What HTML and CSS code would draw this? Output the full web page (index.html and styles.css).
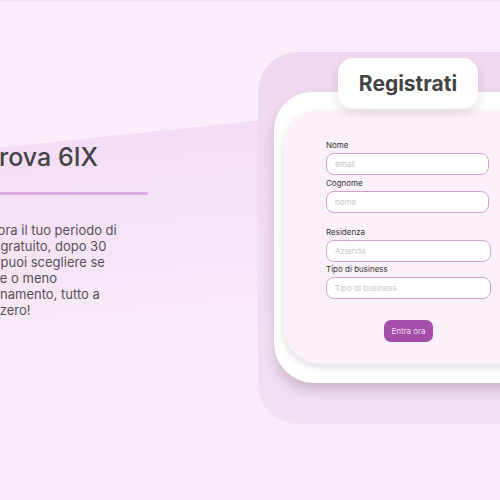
FILE: index.html
```html
<!DOCTYPE html>
<html lang="it">
<head>
<meta charset="utf-8">
<title>Prova 6IX</title>
<link rel="stylesheet" href="styles.css">
</head>
<body>
<main class="page">
  <section class="intro">
    <h1 class="intro-title">Prova 6IX</h1>
    <div class="intro-rule"></div>
    <p class="intro-text">Inizia ora il tuo periodo di<br>prova gratuito, dopo 30<br>giorni puoi scegliere se<br>attivare o meno<br>l'abbonamento, tutto a<br>costo zero!</p>
  </section>
  <section class="panel">
    <div class="tab">Registrati</div>
    <div class="card">
      <form class="form-panel">
        <div class="group">
          <label class="field"><span class="field-label">Nome</span><input class="field-input" type="text" placeholder="email"></label>
          <label class="field"><span class="field-label">Cognome</span><input class="field-input" type="text" placeholder="nome"></label>
        </div>
        <div class="group group-wide">
          <label class="field"><span class="field-label">Residenza</span><input class="field-input" type="text" placeholder="Azienda"></label>
          <label class="field"><span class="field-label">Tipo di business</span><input class="field-input" type="text" placeholder="Tipo di business"></label>
        </div>
        <button class="submit" type="button">Entra ora</button>
      </form>
    </div>
  </section>
</main>
</body>
</html>
```
FILE: styles.css
```css
html, body {
  margin: 0;
  padding: 0;
}

body {
  width: 500px;
  height: 500px;
  overflow: hidden;
  font-family: Inter, "Noto Sans", sans-serif;
  background: linear-gradient(174deg, #f9eef9 0%, #f9eefa 26.7%, #f4def6 26.7%, #f6e4f7 48%, #f8ebf9 62%, #f8ecf9 100%);
  box-shadow: inset 0 2px 2px -1px rgba(120, 120, 120, 0.12);
}

.page {
  display: flex;
  align-items: flex-start;
  padding-top: 52px;
  width: max-content;
}

.intro {
  flex-shrink: 0;
  width: 296px;
  margin-left: -38px;
  padding-top: 90px;
}

.intro-title {
  margin: 0 0 0 21px;
  font-size: 25px;
  line-height: 30px;
  font-weight: 500;
  color: #444;
}

.intro-rule {
  margin-top: 20px;
  width: 186px;
  height: 3px;
  border-radius: 2px;
  background: #dcaadf;
}

.intro-text {
  margin: 27px 0 0;
  font-size: 13px;
  line-height: 16px;
  color: #555255;
}

.panel {
  position: relative;
  flex-shrink: 0;
  width: 260px;
  height: 372px;
  box-sizing: border-box;
  padding: 40px 0 0 16px;
  border-radius: 40px 0 0 40px;
  background: linear-gradient(180deg, #efd8f0 0%, #f1ddf2 60%, #f2e0f3 100%);
}

.tab {
  position: absolute;
  left: 80px;
  top: 6px;
  z-index: 2;
  width: 140px;
  height: 51px;
  display: flex;
  align-items: center;
  justify-content: center;
  background: #fff;
  border-radius: 15px;
  box-shadow: 0 4px 10px rgba(90, 60, 90, 0.16);
  font-size: 21px;
  font-weight: 700;
  color: #444;
}

.card {
  height: 291px;
  box-sizing: border-box;
  padding: 18px 0 19px 9px;
  background: #fff;
  border-radius: 38px 0 0 40px;
  box-shadow: 0 8px 12px rgba(70, 40, 70, 0.2);
}

.form-panel {
  height: 254px;
  box-sizing: border-box;
  padding: 30px 0 22px 43px;
  background: #faf1fa;
  border-radius: 36px 0 0 38px;
  box-shadow: 0 4px 7px rgba(60, 40, 60, 0.14);
  display: flex;
  flex-direction: column;
  align-items: flex-start;
  width: 230px;
}

.group {
  display: flex;
  flex-direction: column;
  gap: 2.5px;
  width: 163px;
}

.group-wide {
  width: 165px;
  margin-top: 14px;
}

.field {
  display: flex;
  flex-direction: column;
  gap: 2px;
}

.field-label {
  font-size: 8px;
  line-height: 11px;
  color: #333;
}

.field-input {
  box-sizing: border-box;
  width: 100%;
  height: 22px;
  margin: 0;
  padding: 0 0 0 8px;
  border: 1px solid #d6a0d9;
  border-radius: 8px;
  background: #fff;
  font-family: inherit;
  font-size: 8px;
  color: #333;
  outline: none;
}

.field-input::placeholder {
  color: #cbc6cb;
}

.submit {
  margin: 21px 0 0 58px;
  width: 49px;
  height: 22px;
  padding: 0;
  border: none;
  border-radius: 7px;
  background: #a54ea8;
  color: #f2dff3;
  font-family: inherit;
  font-size: 8px;
}
```
